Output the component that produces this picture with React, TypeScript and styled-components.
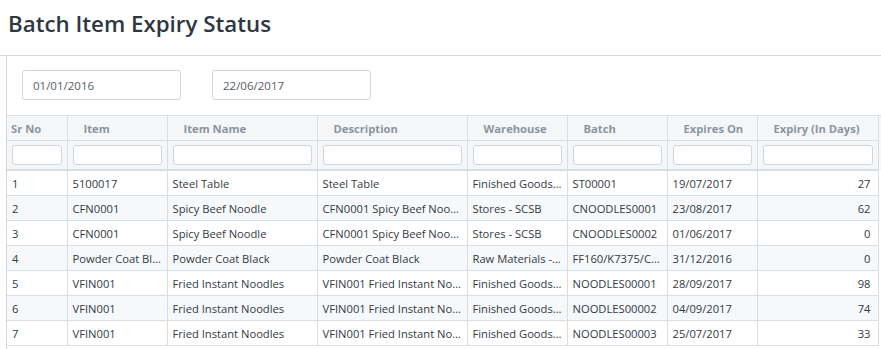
import React from 'react';
import styled, { createGlobalStyle } from 'styled-components';

const GlobalStyle = createGlobalStyle`
  body {
    margin: 0;
    background: #fff;
    font-family: 'Open Sans', 'Liberation Sans', sans-serif;
  }
`;

const Title = styled.h2`
  margin: 0;
  height: 55px;
  padding: 8px 0 0 8px;
  box-sizing: border-box;
  font-size: 22.3px;
  font-weight: 600;
  color: #2f3742;
`;

const Panel = styled.div`
  border-top: 1px solid #d3d8de;
  padding-left: 6px;
`;

const Body = styled.div`
  border-left: 1px solid #d3d8de;
  min-height: 300px;
`;

const DateRow = styled.div`
  display: flex;
  gap: 31px;
  padding: 14px 0 15px 15px;
`;

const DateInput = styled.input`
  width: 159px;
  height: 30px;
  box-sizing: border-box;
  border: 1px solid #cfd5db;
  border-radius: 3px;
  padding: 0 10px;
  font-family: inherit;
  font-size: 11.5px;
  color: #555d66;
`;

const HeadWrap = styled.div`
  background: #f4f6f8;
  border-top: 1px solid #d9dee3;
`;

const Table = styled.table`
  border-collapse: collapse;
  table-layout: fixed;
  width: 871px;
  font-size: 11.2px;
`;

const Th = styled.th<{ $first?: boolean }>`
  height: 24px;
  padding: 0 0 0 ${(p) => (p.$first ? '4px' : '16px')};
  text-align: left;
  font-weight: 700;
  color: #8c959f;
  border: 1px solid #d9dee3;
  border-top: none;
  border-left: ${(p) => (p.$first ? 'none' : '1px solid #d9dee3')};
  white-space: nowrap;
  overflow: hidden;
`;

const FilterCell = styled.td<{ $first?: boolean }>`
  height: 28px;
  padding: 0 5px;
  border: 1px solid #d9dee3;
  border-left: ${(p) => (p.$first ? 'none' : '1px solid #d9dee3')};
`;

const FilterInput = styled.input`
  display: block;
  width: 100%;
  height: 20px;
  box-sizing: border-box;
  border: 1px solid #cfd5db;
  border-radius: 3px;
  background: #fff;
`;

const Row = styled.tr<{ $alt: boolean }>`
  background: ${(p) => (p.$alt ? '#f6f8fa' : '#fff')};
`;

const Td = styled.td<{ $right?: boolean; $first?: boolean }>`
  height: 24px;
  padding: 0 ${(p) => (p.$right ? '7px' : '5px')} 0 5px;
  color: #333a44;
  text-align: ${(p) => (p.$right ? 'right' : 'left')};
  border: 1px solid #d9dee3;
  border-left: ${(p) => (p.$first ? 'none' : '1px solid #d9dee3')};
  white-space: nowrap;
  overflow: hidden;
  text-overflow: ellipsis;
`;

const columns = [
  { title: 'Sr No', width: 60 },
  { title: 'Item', width: 100 },
  { title: 'Item Name', width: 150 },
  { title: 'Description', width: 150 },
  { title: 'Warehouse', width: 100 },
  { title: 'Batch', width: 100 },
  { title: 'Expires On', width: 90 },
  { title: 'Expiry (In Days)', width: 121 },
];

const rows = [
  ['1', '5100017', 'Steel Table', 'Steel Table', 'Finished Goods - SCSB', 'ST00001', '19/07/2017', '27'],
  ['2', 'CFN0001', 'Spicy Beef Noodle', 'CFN0001 Spicy Beef Noodle', 'Stores - SCSB', 'CNOODLES0001', '23/08/2017', '62'],
  ['3', 'CFN0001', 'Spicy Beef Noodle', 'CFN0001 Spicy Beef Noodle', 'Stores - SCSB', 'CNOODLES0002', '01/06/2017', '0'],
  ['4', 'Powder Coat Black', 'Powder Coat Black', 'Powder Coat Black', 'Raw Materials - SCSB', 'FF160/K7375/CB-01', '31/12/2016', '0'],
  ['5', 'VFIN001', 'Fried Instant Noodles', 'VFIN001 Fried Instant Noodles', 'Finished Goods - SCSB', 'NOODLES00001', '28/09/2017', '98'],
  ['6', 'VFIN001', 'Fried Instant Noodles', 'VFIN001 Fried Instant Noodles', 'Finished Goods - SCSB', 'NOODLES00002', '04/09/2017', '74'],
  ['7', 'VFIN001', 'Fried Instant Noodles', 'VFIN001 Fried Instant Noodles', 'Finished Goods - SCSB', 'NOODLES00003', '25/07/2017', '33'],
];

const ColGroup = () => (
  <colgroup>
    {columns.map((c) => (
      <col key={c.title} style={{ width: c.width }} />
    ))}
  </colgroup>
);

const App = () => {
  return (
    <>
      <GlobalStyle />
      <Title>Batch Item Expiry Status</Title>
      <Panel>
        <Body>
          <DateRow>
            <DateInput defaultValue="01/01/2016" />
            <DateInput defaultValue="22/06/2017" />
          </DateRow>
          <HeadWrap>
            <Table>
              <ColGroup />
              <thead>
                <tr>
                  {columns.map((c, i) => (
                    <Th key={c.title} $first={i === 0}>
                      {c.title}
                    </Th>
                  ))}
                </tr>
                <tr>
                  {columns.map((c, i) => (
                    <FilterCell key={c.title} $first={i === 0}>
                      <FilterInput />
                    </FilterCell>
                  ))}
                </tr>
              </thead>
            </Table>
          </HeadWrap>
          <Table>
            <ColGroup />
            <tbody>
              {rows.map((r, ri) => (
                <Row key={r[0]} $alt={ri % 2 === 1}>
                  {r.map((v, ci) => (
                    <Td key={ci} $first={ci === 0} $right={ci === 7}>
                      {v}
                    </Td>
                  ))}
                </Row>
              ))}
            </tbody>
          </Table>
        </Body>
      </Panel>
    </>
  );
};

export default App;
